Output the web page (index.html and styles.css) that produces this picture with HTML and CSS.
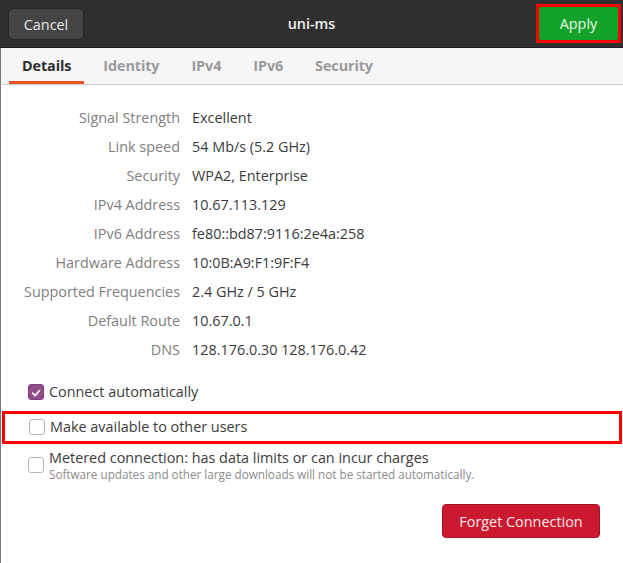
FILE: index.html
```html
<!DOCTYPE html>
<html lang="en">
<head>
<meta charset="utf-8">
<title>uni-ms</title>
<link rel="stylesheet" href="styles.css">
</head>
<body>
<div class="window">
  <header class="headerbar">
    <button class="btn cancel">Cancel</button>
    <div class="title">uni-ms</div>
    <div class="highlight apply-hl"><button class="btn apply">Apply</button></div>
  </header>
  <nav class="tabs">
    <span class="tab active">Details</span>
    <span class="tab">Identity</span>
    <span class="tab">IPv4</span>
    <span class="tab">IPv6</span>
    <span class="tab">Security</span>
  </nav>
  <main class="content">
    <dl class="details">
      <dt>Signal Strength</dt><dd>Excellent</dd>
      <dt>Link speed</dt><dd>54 Mb/s (5.2 GHz)</dd>
      <dt>Security</dt><dd>WPA2, Enterprise</dd>
      <dt>IPv4 Address</dt><dd>10.67.113.129</dd>
      <dt>IPv6 Address</dt><dd>fe80::bd87:9116:2e4a:258</dd>
      <dt>Hardware Address</dt><dd>10:0B:A9:F1:9F:F4</dd>
      <dt>Supported Frequencies</dt><dd>2.4 GHz / 5 GHz</dd>
      <dt>Default Route</dt><dd>10.67.0.1</dd>
      <dt>DNS</dt><dd>128.176.0.30 128.176.0.42</dd>
    </dl>
    <div class="checks">
      <label class="check-row row-auto">
        <span class="box checked"><svg viewBox="0 0 16 16" width="16" height="16"><path d="M4.2 8.2 L7 11 L12 5.2" fill="none" stroke="#fff" stroke-width="1.8" stroke-linecap="round" stroke-linejoin="round"/></svg></span>
        <span class="check-text">Connect automatically</span>
      </label>
      <div class="highlight row-hl">
        <label class="check-row">
          <span class="box"></span>
          <span class="check-text">Make available to other users</span>
        </label>
      </div>
      <label class="check-row row-metered">
        <span class="box"></span>
        <span class="check-stack">
          <span class="check-text">Metered connection: has data limits or can incur charges</span>
          <span class="check-sub">Software updates and other large downloads will not be started automatically.</span>
        </span>
      </label>
    </div>
    <div class="actions">
      <button class="forget">Forget Connection</button>
    </div>
  </main>
</div>
</body>
</html>
```

FILE: styles.css
```css
* { box-sizing: border-box; }
html, body { margin: 0; padding: 0; }
body {
  width: 623px;
  height: 563px;
  overflow: hidden;
  background: #ffffff;
  font-family: "Open Sans", "Noto Sans", sans-serif;
  font-size: 14.4px;
  color: #3c3c3c;
}
.window { width: 623px; height: 563px; display: flex; flex-direction: column; }

.headerbar {
  height: 48px;
  background: #2f2f2f;
  border-bottom: 1px solid #1e1e1e;
  display: grid;
  grid-template-columns: 1fr auto 1fr;
  align-items: start;
  padding: 0 2px;
}
.btn {
  font-family: inherit;
  font-size: 14.4px;
  border-radius: 5px;
  cursor: default;
}
.cancel {
  justify-self: start;
  margin: 8px 0 0 6px;
  width: 76px;
  height: 32px;
  background: #454545;
  border: 1px solid #262626;
  color: #e6e6e6;
  padding: 0;
}
.title {
  color: #f0f0f0;
  font-weight: 600;
  line-height: 47px;
}
.highlight { border: 3px solid #ff0000; }
.apply-hl {
  justify-self: end;
  margin-top: 4px;
  width: 85px;
  height: 39px;
}
.apply {
  display: block;
  width: 100%;
  height: 100%;
  border: none;
  border-radius: 2px;
  background: #12a22a;
  color: #eaf7ea;
  padding: 0;
}

.tabs {
  height: 37px;
  background: #f6f6f6;
  border-bottom: 1px solid #cfcfcf;
  border-left: 1px solid #777;
  display: flex;
  gap: 6px;
  padding-left: 8px;
}
.tab {
  padding: 0 13px 0 13px;
  font-weight: 700;
  color: #9a9a9a;
  line-height: 35px;
  border-bottom: 3px solid transparent;
  letter-spacing: -0.1px;
}
.tab.active {
  color: #2e2e2e;
  border-bottom-color: #e95420;
}

.content {
  flex: 1;
  border-left: 1px solid #777;
  background: #ffffff;
  padding-top: 18px;
}
.details {
  margin: 0;
  display: grid;
  grid-template-columns: 179px auto;
  column-gap: 12px;
  line-height: 29px;
}
.details dt { text-align: right; color: #808080; }
.details dd { margin: 0; color: #3c3c3c; }

.checks { margin-top: 16px; }
.check-row {
  display: flex;
  align-items: center;
  gap: 5px;
  padding-left: 27px;
}
.row-auto { height: 24px; }
.box {
  width: 16px;
  height: 16px;
  flex: none;
  border: 1px solid #b6b6b6;
  border-radius: 3px;
  background: #ffffff;
  display: flex;
}
.box.checked { background: #924d8b; border-color: #7d3f77; }
.row-hl {
  margin: 7px 1px 0 1px;
  height: 33px;
  padding-top: 0;
}
.row-hl .check-row { padding-left: 24px; height: 25px; }
.row-metered { margin-top: 5px; }
.check-stack { display: flex; flex-direction: column; }
.check-text { line-height: 18px; color: #3c3c3c; }
.check-sub { font-size: 11.7px; line-height: 14px; color: #8c8c8c; }

.actions {
  display: flex;
  justify-content: flex-end;
  padding: 23px 23px 0 0;
}
.forget {
  width: 158px;
  height: 34px;
  font-family: inherit;
  font-size: 14.4px;
  color: #fbe9eb;
  background: #cb1a30;
  border: 1px solid #a51226;
  border-radius: 4px;
  padding: 0;
}
```
